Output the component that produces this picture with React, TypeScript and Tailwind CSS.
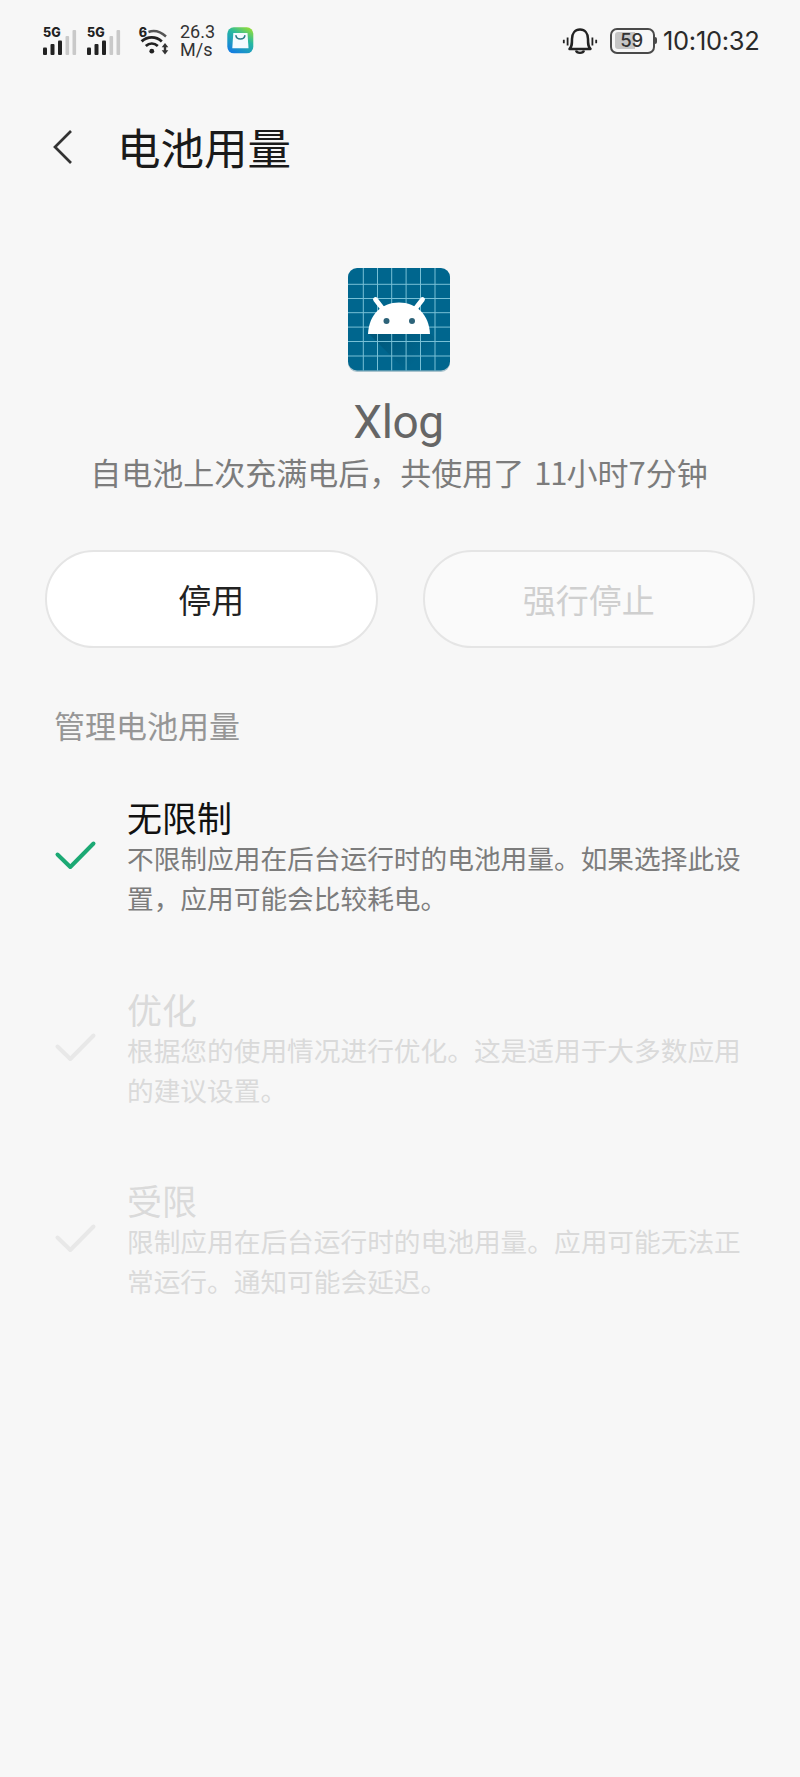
const options = [
  {
    title: "无限制",
    lines: ["不限制应用在后台运行时的电池用量。如果选择此设", "置，应用可能会比较耗电。"],
    active: true,
  },
  {
    title: "优化",
    lines: ["根据您的使用情况进行优化。这是适用于大多数应用", "的建议设置。"],
    active: false,
  },
  {
    title: "受限",
    lines: ["限制应用在后台运行时的电池用量。应用可能无法正", "常运行。通知可能会延迟。"],
    active: false,
  },
];

function Signal() {
  return (
    <div className="flex h-[28px] w-[34px] flex-col">
      <span className="h-[11px] font-['Inter'] text-[12.5px] leading-[11px] font-extrabold text-[#222]">5G</span>
      <svg className="-mt-[9px] h-[26px] w-[34px] shrink-0" viewBox="0 0 34 26">
        <g fill="#222">
          <rect x="0" y="18.5" width="4" height="7.5" rx="1" />
          <rect x="7.5" y="15" width="4" height="11" rx="1" />
          <rect x="15" y="11.5" width="4" height="14.5" rx="1" />
        </g>
        <g fill="#c9c9c9">
          <rect x="22.5" y="7" width="3.6" height="19" rx="1" />
          <rect x="29.5" y="1" width="3.6" height="25" rx="1" />
        </g>
      </svg>
    </div>
  );
}

function Wifi() {
  return (
    <svg className="h-[32px] w-[32px]" viewBox="-1 -4 32 32" fill="none">
      <text x="-0.3" y="9.8" fontFamily="Inter" fontSize="12.5" fontWeight="800" fill="#222">6</text>
      <path d="M9.5 5C15.5 2.8 21.5 4.6 27 9.5" stroke="#555" strokeWidth="2.4" />
      <path d="M2.6 14.4C8.5 9 17 9 22.8 14.4" stroke="#222" strokeWidth="2.8" />
      <path d="M6.8 19C10.4 15.8 15.2 15.8 18.8 19" stroke="#222" strokeWidth="2.8" />
      <circle cx="12.8" cy="24.2" r="2.4" fill="#222" />
      <path d="M26 16l3.3 4.3h-2.1v3h2.1L26 27.6l-3.3-4.3h2.1v-3h-2.1z" fill="#333" />
    </svg>
  );
}

function StoreIcon() {
  return (
    <svg className="h-[27px] w-[27px]" viewBox="0 0 27 27" fill="none">
      <defs>
        <linearGradient id="store" x1="22" y1="1" x2="7" y2="26" gradientUnits="userSpaceOnUse">
          <stop offset="0" stopColor="#8fdc3c" />
          <stop offset="0.4" stopColor="#27b9a0" />
          <stop offset="1" stopColor="#147fe0" />
        </linearGradient>
      </defs>
      <rect x="0.3" y="0.3" width="26" height="26" rx="6.5" fill="url(#store)" />
      <path d="M6.3 6h14.2l1 15.2H5.3z" fill="#f3fbff" />
      <path d="M9 8.8c.8 4.2 8 4.2 8.8 0" stroke="#2c7d86" strokeWidth="1.6" strokeLinecap="round" />
    </svg>
  );
}

function Bell() {
  return (
    <svg className="h-[30px] w-[36px]" viewBox="0 0 36 30" fill="none" stroke="#222">
      <path
        d="M7.5 23C10 20.6 10 18 10 13C10 7.4 13 3.6 18 3.6S26 7.4 26 13C26 18 26 20.6 28.5 23Z"
        strokeWidth="2.5"
        strokeLinejoin="round"
      />
      <path d="M14 24.5c.8 3.1 7.2 3.1 8 0" strokeWidth="2.3" />
      <path d="M5.6 11.5v8M30.4 11.5v8" strokeWidth="1.8" />
      <path d="M1.8 13.8v3.4M34.2 13.8v3.4" strokeWidth="1.8" />
    </svg>
  );
}

function Battery() {
  return (
    <div className="flex items-center">
      <div className="relative flex h-[26px] w-[45px] items-center justify-center rounded-[7px] border-2 border-[#4a4a4a] pr-[2px]">
        <div className="absolute top-[2.5px] left-[3px] h-[17px] w-[20px] rounded-l-[3px] bg-[#c6c6c6]" />
        <span className="relative font-['Inter'] text-[18.5px] leading-none font-medium tracking-[-0.3px] text-[#333]">59</span>
      </div>
      <div className="h-[7px] w-[2px] rounded-r-full bg-[#4a4a4a]" />
    </div>
  );
}

function StatusBar() {
  return (
    <div className="flex h-[80px] items-center pt-px pr-[40px] pl-[43px]">
      <Signal />
      <div className="ml-[10px]"><Signal /></div>
      <div className="-mt-[4px] ml-[17px]"><Wifi /></div>
      <div className="ml-[10px] w-[38px] font-['Roboto'] text-[18px] leading-[18px] text-[#333]">
        <div>26.3</div>
        <div>M/s</div>
      </div>
      <div className="ml-[9px]"><StoreIcon /></div>
      <div className="ml-auto"><Bell /></div>
      <div className="ml-[12px]"><Battery /></div>
      <span className="ml-[6px] w-[97px] font-['Inter'] text-[25.5px] leading-none tracking-[-0.3px] whitespace-nowrap text-[#2a2a2a]">10:10:32</span>
    </div>
  );
}

function AppIcon() {
  const lines = [14.8, 29, 43.2, 57.6, 72, 86.5];
  return (
    <svg className="mr-[2px] h-[104px] w-[104px]" viewBox="0 0 104 104" fill="none">
      <defs>
        <clipPath id="tile"><rect x="1" width="102" height="102.5" rx="9" /></clipPath>
        <linearGradient id="shade" x1="40" y1="60" x2="66" y2="96" gradientUnits="userSpaceOnUse">
          <stop offset="0" stopColor="#00425e" stopOpacity="0.4" />
          <stop offset="1" stopColor="#00425e" stopOpacity="0" />
        </linearGradient>
      </defs>
      <rect x="1" y="1.5" width="102" height="102.5" rx="9" fill="#a9c3cd" />
      <g clipPath="url(#tile)">
        <rect x="1" width="102" height="103" fill="#00668e" />
        <path d="M21 65h62l20 20v17H58z" fill="url(#shade)" />
        {lines.map((n) => (
          <path key={n} d={`M${n + 1.5} 0v103M1 ${n + 1.5}h102`} stroke="#78c0d6" strokeWidth="1" />
        ))}
      </g>
      <path d="M28.5 31.5l7 9M75.5 31.5l-7 9" stroke="#fff" strokeWidth="4.8" strokeLinecap="round" />
      <path d="M21 66C22 46.5 34.5 34.5 52 34.5s30 12 31 31.5z" fill="#fff" />
      <circle cx="39.5" cy="53" r="3" fill="#2d6379" />
      <circle cx="65" cy="53" r="3" fill="#2d6379" />
    </svg>
  );
}

function Check({ active }: { active: boolean }) {
  return (
    <svg className="h-[32px] w-[44px]" viewBox="0 0 44 32" fill="none">
      <path
        d="M4.5 14.5L17.3 27L40.5 3.5"
        stroke={active ? "#1ca974" : "#e8e8e8"}
        strokeWidth="4"
        strokeLinecap="round"
        strokeLinejoin="round"
      />
    </svg>
  );
}

export default function App() {
  return (
    <div className="h-[1777px] w-[800px] overflow-hidden bg-[#f7f7f7] font-['Noto_Sans_CJK_SC',sans-serif]">
      <StatusBar />

      <header className="flex h-[134px] items-center pl-[52px]">
        <svg className="h-[38px] w-[22px]" viewBox="0 0 22 38" fill="none">
          <path d="M19 3L3 19L19 35" stroke="#333" strokeWidth="2.7" />
        </svg>
        <h1 className="ml-[43px] text-[43.5px] leading-none text-[#1a1a1a]">电池用量</h1>
      </header>

      <section className="flex flex-col items-center pt-[54px]">
        <AppIcon />
        <div className="mt-[23px] mr-[3px] font-['Roboto'] text-[46px] leading-[54px] tracking-[-0.4px] text-[#666]">Xlog</div>
        <p className="mr-[2px] text-[31px] leading-[46px] whitespace-nowrap text-[#7c7c7c] [word-spacing:3px]">
          自电池上次充满电后，共使用了 <span className="tracking-[-1px]">11</span>小时7分钟
        </p>
      </section>

      <div className="mt-[55px] flex gap-[45px] px-[45px]">
        <button className="h-[98px] flex-1 rounded-full border-2 border-[#e5e5e5] bg-white pt-px text-[33px] text-[#222]">停用</button>
        <button className="h-[98px] flex-1 rounded-full border-2 border-[#e5e5e5] bg-[#fafafa] pt-px text-[33px] text-[#cfcfcf]">强行停止</button>
      </div>

      <h2 className="mt-[54px] pl-[54px] text-[31px] leading-[46px] text-[#969696]">管理电池用量</h2>

      <div className="mt-[48px]">
        {options.map((o) => (
          <div key={o.title} className="flex h-[191.5px] pl-[53px]">
            <div className="mt-[44px]"><Check active={o.active} /></div>
            <div className="ml-[30px] whitespace-nowrap">
              <div className={`text-[35px] leading-[42px] ${o.active ? "text-[#111]" : "text-[#dadada]"}`}>{o.title}</div>
              <div className={`text-[26.7px] leading-[40px] ${o.active ? "text-[#7c7c7c]" : "text-[#dadada]"}`}>
                {o.lines.map((line) => (
                  <div key={line}>{line}</div>
                ))}
              </div>
            </div>
          </div>
        ))}
      </div>
    </div>
  );
}
